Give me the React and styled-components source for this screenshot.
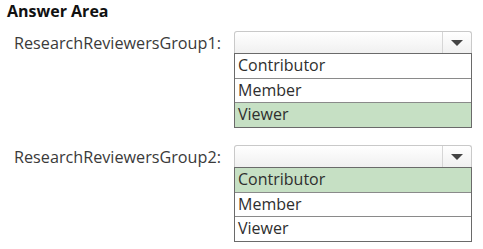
import React from 'react';
import styled, { createGlobalStyle } from 'styled-components';

const GlobalStyle = createGlobalStyle`
  body {
    margin: 0;
    background: #fff;
    font-family: 'Open Sans', 'Liberation Sans', sans-serif;
    color: #333;
  }
`;

const Page = styled.div`
  width: 483px;
  height: 249px;
  padding: 1px 0 0 7px;
  box-sizing: border-box;
`;

const Title = styled.h1`
  margin: 0;
  font-size: 16px;
  line-height: 21px;
  font-weight: 700;
  color: #111;
`;

const Rows = styled.div`
  display: flex;
  flex-direction: column;
  gap: 17.5px;
  margin-top: 9px;
`;

const Row = styled.div`
  display: flex;
  align-items: flex-start;
`;

const Label = styled.div`
  width: 227px;
  padding-left: 7px;
  padding-top: 1px;
  box-sizing: border-box;
  font-size: 16.2px;
  line-height: 22px;
  color: #3a3a3a;
`;

const Dropdown = styled.div`
  width: 238px;
  display: flex;
  flex-direction: column;
`;

const Select = styled.div`
  height: 21px;
  display: flex;
  border: 1px solid #c9c9c9;
  border-bottom: none;
  border-radius: 3px 3px 0 0;
  background: linear-gradient(#ffffff, #f0f0f0);
`;

const SelectField = styled.div`
  flex: 1;
`;

const Arrow = styled.div`
  width: 28px;
  border-left: 1px solid #d6d6d6;
  display: flex;
  align-items: center;
  justify-content: center;

  &::after {
    content: '';
    border-left: 6px solid transparent;
    border-right: 6px solid transparent;
    border-top: 6px solid #444;
  }
`;

const List = styled.div`
  border: 1px solid #6a6a6a;
  display: flex;
  flex-direction: column;
`;

const Option = styled.div`
  height: 23.5px;
  line-height: 23.5px;
  padding-left: 3px;
  font-size: 16px;
  color: #2e2e2e;
  background: ${(p) => (p.$selected ? '#c6e0c4' : '#fff')};
  border-top: ${(p) => (p.$first ? 'none' : '1px solid #8a8a8a')};
`;

const groups = [
  { name: 'ResearchReviewersGroup1:', selected: 'Viewer' },
  { name: 'ResearchReviewersGroup2:', selected: 'Contributor' },
];

const options = ['Contributor', 'Member', 'Viewer'];

export default function App() {
  return (
    <Page>
      <GlobalStyle />
      <Title>Answer Area</Title>
      <Rows>
        {groups.map((g) => (
          <Row key={g.name}>
            <Label>{g.name}</Label>
            <Dropdown>
              <Select>
                <SelectField />
                <Arrow />
              </Select>
              <List>
                {options.map((o, i) => (
                  <Option key={o} $first={i === 0} $selected={o === g.selected}>
                    {o}
                  </Option>
                ))}
              </List>
            </Dropdown>
          </Row>
        ))}
      </Rows>
    </Page>
  );
}
